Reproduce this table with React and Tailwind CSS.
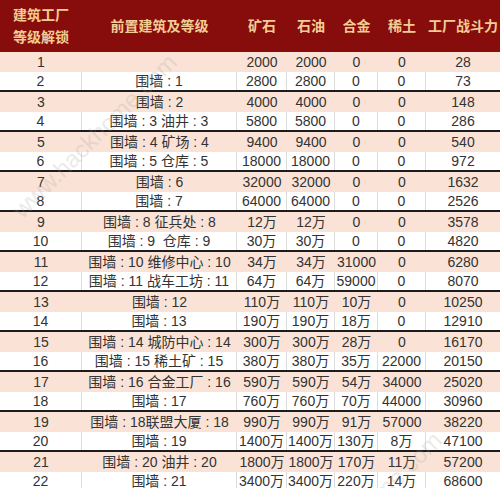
const rows = [
  ['1', '', '2000', '2000', '0', '0', '28'],
  ['2', '围墙 : 1', '2800', '2800', '0', '0', '73'],
  ['3', '围墙 : 2', '4000', '4000', '0', '0', '148'],
  ['4', '围墙 : 3 油井 : 3', '5800', '5800', '0', '0', '286'],
  ['5', '围墙 : 4 矿场 : 4', '9400', '9400', '0', '0', '540'],
  ['6', '围墙 : 5 仓库 : 5', '18000', '18000', '0', '0', '972'],
  ['7', '围墙 : 6', '32000', '32000', '0', '0', '1632'],
  ['8', '围墙 : 7', '64000', '64000', '0', '0', '2526'],
  ['9', '围墙 : 8 征兵处 : 8', '12万', '12万', '0', '0', '3578'],
  ['10', '围墙 : 9  仓库 : 9', '30万', '30万', '0', '0', '4820'],
  ['11', '围墙 : 10 维修中心 : 10', '34万', '34万', '31000', '0', '6280'],
  ['12', '围墙 : 11 战车工坊 : 11', '64万', '64万', '59000', '0', '8070'],
  ['13', '围墙 : 12', '110万', '110万', '10万', '0', '10250'],
  ['14', '围墙 : 13', '190万', '190万', '18万', '0', '12910'],
  ['15', '围墙 : 14 城防中心 : 14', '300万', '300万', '28万', '0', '16170'],
  ['16', '围墙 : 15 稀土矿 : 15', '380万', '380万', '35万', '22000', '20150'],
  ['17', '围墙 : 16 合金工厂 : 16', '590万', '590万', '54万', '34000', '25020'],
  ['18', '围墙 : 17', '760万', '760万', '70万', '44000', '30960'],
  ['19', '围墙 : 18联盟大厦 : 18', '990万', '990万', '91万', '57000', '38220'],
  ['20', '围墙 : 19', '1400万', '1400万', '130万', '8万', '47100'],
  ['21', '围墙 : 20 油井 : 20', '1800万', '1800万', '170万', '11万', '57200'],
  ['22', '围墙 : 21', '3400万', '3400万', '220万', '14万', '68600'],
]

const heads = ['前置建筑及等级', '矿石', '石油', '合金', '稀土', '工厂战斗力']

export default function App() {
  return (
    <div
      className="relative w-[500px] h-[488px] overflow-hidden bg-white"
      style={{ fontFamily: '"Liberation Sans", "Noto Sans CJK SC", sans-serif' }}
    >
      <div className="grid grid-cols-[82px_155px_50px_48px_43px_48px_74px] h-[52px] bg-[#870c0c] text-[#f3cc94] font-bold text-[14px]">
        <div className="flex flex-col items-center justify-center leading-[22px]">
          <span>建筑工厂</span>
          <span>等级解锁</span>
        </div>
        {heads.map((h) => (
          <div key={h} className="flex items-center justify-center whitespace-nowrap">{h}</div>
        ))}
      </div>

      {rows.map((r, i) => {
        const pink = i % 2 === 0
        return (
          <div
            key={r[0]}
            className={
              pink
                ? 'grid grid-cols-[82px_155px_50px_48px_43px_48px_74px] h-5 bg-[#fae3d6] text-[#333] text-[14px]'
                : 'grid grid-cols-[82px_155px_50px_48px_43px_48px_74px] h-5 bg-white text-[#333] text-[14px] border-b-2 border-[#1c1c1c]'
            }
          >
            {r.map((c, j) => (
              <div
                key={j}
                className={
                  !pink && j < 6
                    ? 'flex items-center justify-center whitespace-pre leading-none border-r border-[#dcdcdc]'
                    : 'flex items-center justify-center whitespace-pre leading-none'
                }
              >
                {c}
              </div>
            ))}
          </div>
        )
      })}

      <div className="absolute left-[95px] top-[136px] -translate-x-1/2 -translate-y-1/2 -rotate-45 text-[24px] text-[#9a9a9a] opacity-20 whitespace-nowrap pointer-events-none">
        www.hackhome.com
      </div>
      <div className="absolute left-[360px] top-[514px] -translate-x-1/2 -translate-y-1/2 -rotate-45 text-[24px] text-[#9a9a9a] opacity-20 whitespace-nowrap pointer-events-none">
        www.hackhome.com
      </div>
    </div>
  )
}
